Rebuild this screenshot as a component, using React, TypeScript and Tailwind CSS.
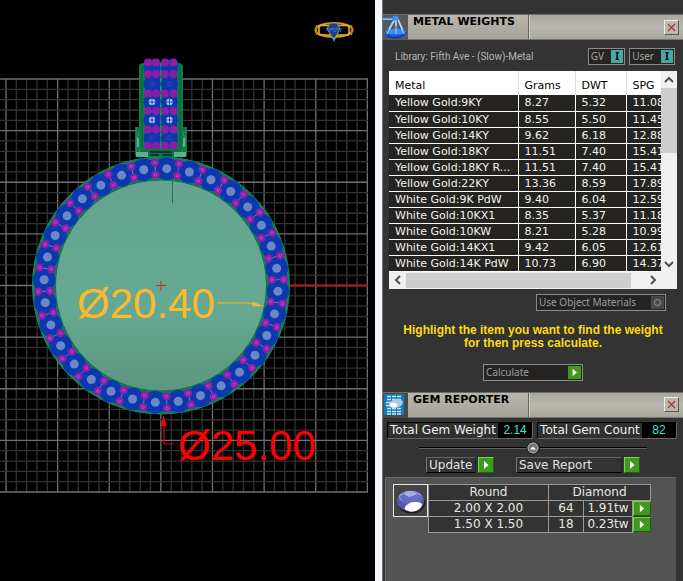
import { useState } from "react";

const metals = [
  ["Yellow Gold:9KY", "8.27", "5.32", "11.08"],
  ["Yellow Gold:10KY", "8.55", "5.50", "11.45"],
  ["Yellow Gold:14KY", "9.62", "6.18", "12.88"],
  ["Yellow Gold:18KY", "11.51", "7.40", "15.41"],
  ["Yellow Gold:18KY R...", "11.51", "7.40", "15.41"],
  ["Yellow Gold:22KY", "13.36", "8.59", "17.89"],
  ["White Gold:9K PdW", "9.40", "6.04", "12.59"],
  ["White Gold:10KX1", "8.35", "5.37", "11.18"],
  ["White Gold:10KW", "8.21", "5.28", "10.99"],
  ["White Gold:14KX1", "9.42", "6.05", "12.61"],
  ["White Gold:14K PdW", "10.73", "6.90", "14.37"],
];

const gems = [
  { size: "2.00 X 2.00", count: "64", weight: "1.91tw" },
  { size: "1.50 X 1.50", count: "18", weight: "0.23tw" },
];

// Ring geometry, in viewport pixels per millimetre
const MM = 10.325;
const CX = 161;
const CY = 285.5;
const STONES = 32;

const polar = (deg: number, r: number) => {
  const a = (deg * Math.PI) / 180;
  return { cx: CX + r * Math.sin(a), cy: CY - r * Math.cos(a) };
};

const Grid = () => (
  <g>
    {Array.from({ length: 36 }, (_, i) => {
      const x = 6 + i * MM;
      const major = i % 5 === 0;
      return <line key={i} x1={x} x2={x} y1={79} y2={492} stroke={major ? "#707070" : "#333"} strokeWidth={1.3} />;
    })}
    {Array.from({ length: 41 }, (_, i) => {
      const y = 79 + i * MM;
      const major = i % 5 === 0;
      return <line key={i} x1={0} x2={368} y1={y} y2={y} stroke={major ? "#707070" : "#333"} strokeWidth={1.3} />;
    })}
  </g>
);

const Prong = ({ cx, cy }: { cx: number; cy: number }) => (
  <g>
    <circle cx={cx} cy={cy} r={4.2} fill="#8c1ea8" />
    <circle cx={cx} cy={cy} r={1.3} fill="none" stroke="#b65cc6" strokeWidth={0.8} />
  </g>
);

const RingHead = () => (
  <g>
    <rect x={135.5} y={127} width={51} height={30} fill="#0f7048" />
    <path d="M136 127v28M140 128l-3 12 4 14M186 127v28M182 128l3 12-4 14" stroke="#2a9d6c" fill="none" />
    <path d="M138 138v9M184 138v9" stroke="#6fc4a0" strokeWidth={1.5} />
    <rect x={136} y={152} width={12} height={5} fill="#62ad8c" />
    <rect x={174} y={152} width={12} height={5} fill="#62ad8c" />
    <path d="M139 149V67q0-4 5-4h34q5 0 5 4v82z" fill="#0f7a4b" />
    <path d="M142 66v82M180 66v82" stroke="#0a5c3a" />
    <rect x={145} y={63} width={15} height={85} fill="#0b36a6" />
    <rect x={162} y={63} width={15} height={85} fill="#0b36a6" />
    <path d="M161 62v88" stroke="#2aa585" strokeDasharray="5 3" />
    {[68, 84, 102, 120, 138].map((y) =>
      [152, 169.5].map((x) => <circle key={`${x}-${y}`} cx={x} cy={y} r={8.5} fill="#0d38ad" />)
    )}
    {[84, 138].map((y) =>
      [152, 169.5].map((x) => (
        <circle key={`${x}-${y}`} cx={x} cy={y} r={2} fill="none" stroke="#3d3fae" />
      ))
    )}
    {[102, 120].map((y) =>
      [152, 169.5].map((x) => (
        <g key={`${x}-${y}`}>
          <circle cx={x} cy={y} r={3.2} fill="#b9c6ee" />
          <path d={`M${x - 3.5} ${y}h7M${x} ${y - 3.5}v7`} stroke="#1b3fae" strokeWidth={0.9} />
        </g>
      ))
    )}
    {[62.5, 74, 93.5, 111, 129.5, 145.5].map((y) =>
      [148, 156, 165, 173.5].map((x) => (
        <circle key={`${x}-${y}`} cx={x} cy={y} r={4} fill="#8a1fa6" />
      ))
    )}
    <path d="M150 152h22M150 155h9M163 155h9" stroke="#04291b" strokeWidth={1.5} />
  </g>
);

const Ring = () => (
  <g>
    <circle cx={CX} cy={CY} r={128.5} fill="#0f7f58" stroke="#138c5e" />
    <circle cx={CX} cy={CY} r={117} fill="none" stroke="#0b3494" strokeWidth={18} />
    {Array.from({ length: STONES }, (_, i) => {
      const c = polar(2.8 + (i * 360) / STONES, 117);
      return (
        <g key={i}>
          <circle {...c} r={11.3} fill="#0a38ae" />
          <circle {...c} r={4.5} fill="#6c86c6" />
        </g>
      );
    })}
    <circle cx={CX} cy={CY} r={105.5} fill="url(#finger)" stroke="#0a7052" />
    {Array.from({ length: STONES }, (_, i) => {
      const deg = 2.8 + ((i + 0.5) * 360) / STONES;
      const outer = polar(deg, 123);
      const inner = polar(deg, 111);
      return (
        <g key={i}>
          <line x1={outer.cx} y1={outer.cy} x2={inner.cx} y2={inner.cy} stroke="#6c9bc6" strokeWidth={0.8} />
          <Prong {...outer} />
          <Prong {...inner} />
        </g>
      );
    })}
  </g>
);

const RingGizmo = () => (
  <g fill="none">
    <ellipse cx={334} cy={30} rx={18.5} ry={7} stroke="#d99a14" strokeWidth={2.2} />
    <rect x={319} y={25.5} width={30} height={9.5} rx={2} stroke="#e7ae2a" strokeWidth={1.6} />
    <path d="M316.500 25v10M351.500 25v10" stroke="#b17f16" strokeWidth={1.5} />
    <path d="M330 23h7l3 6-6 11-7-11z" fill="#243f79" stroke="#8496b8" />
    <path d="M326 28l3 4 3-4 3 4 3-4 3 4M326 29h16" stroke="#3975d3" />
    <path d="M331.500 37h5l-2.500 5z" fill="#4694cb" />
  </g>
);

const Viewport = () => (
  <svg viewBox="0 0 375 581" className="block h-auto w-full" role="img" aria-label="Ring front view">
    <defs>
      <linearGradient id="finger" x1="0" y1="0" x2="0" y2="1">
        <stop offset="0" stopColor="#64a48f" />
        <stop offset="0.6" stopColor="#66a992" />
        <stop offset="1" stopColor="#5c967f" />
      </linearGradient>
    </defs>
    <Grid />
    <line x1={290} x2={368} y1={285.5} y2={285.5} stroke="#b31a10" strokeWidth={2} />
    <RingHead />
    <Ring />
    <path d="M172.500 180v23" stroke="#1d7a5c" />
    <path d="M156 285.500h10M161 280.500v10" stroke="#d02a35" />
    <g className="font-['Liberation_Sans',Arial,sans-serif] text-[42px]">
      <text x={77} y={318} fill="#fbb92e">Ø20.40</text>
      <text x={178} y={460} fill="#fe0000">Ø25.00</text>
    </g>
    <path d="M217 303h31l6 1.500" stroke="#fbb92e" fill="none" strokeWidth={1.2} />
    <path d="M264 306l-12-4.500 1 5z" fill="#fbb92e" />
    <path d="M164 426v18h10" stroke="#e00000" fill="none" strokeWidth={1.2} />
    <path d="M163.500 415l-2.500 11h5.500z" fill="#fe0000" />
    <RingGizmo />
  </svg>
);

const MetalIcon = () => (
  <svg viewBox="0 0 25 25" className="size-[25px] shrink-0">
    <rect width="25" height="25" fill="#55585c" />
    <path d="M0 4h13M13 2l-8 14M14 2l7 16M13 3v8" stroke="#b9dcff" strokeWidth="1.600" />
    <path d="M0 3h12M10 1h5v4h-5z" stroke="#2783e8" fill="#4b9cf0" />
    <ellipse cx="12.500" cy="18" rx="11" ry="4.500" fill="#1757d8" />
    <ellipse cx="12.500" cy="16.500" rx="10" ry="3" fill="#3f8df8" />
    <path d="M10 8l-6 11M13 6v13M16 8l5 11" stroke="#a8d2ff" />
    <path d="M4 21q9 4 17-1" stroke="#0a2b86" fill="none" />
  </svg>
);

const GemIcon = () => (
  <svg viewBox="0 0 25 25" className="size-[25px] shrink-0">
    <rect width="25" height="25" fill="#45494c" />
    <rect x="1" y="1" width="20" height="21" fill="#167bb4" />
    <path d="M4 3.500h14M4 6.500h14M4 15.500h14M4 18.500h14M4 21h14" stroke="#c4e7f5" strokeWidth="1.300" strokeDasharray="4 1" />
    <path d="M3 9.500h5M3 12.500h5" stroke="#c4e7f5" strokeWidth="1.300" />
    <ellipse cx="13" cy="10.500" rx="7" ry="4.500" fill="#a9cadb" transform="rotate(-15 13 10.500)" />
    <ellipse cx="10.500" cy="12" rx="4" ry="2.500" fill="#f2fbff" />
  </svg>
);

const RoundGem = () => (
  <svg viewBox="0 0 34 31" className="block h-[31px] w-full">
    <ellipse cx="18" cy="18" rx="14" ry="11" fill="#1c1c20" />
    <ellipse cx="17" cy="16" rx="14" ry="10.500" fill="#5557ae" />
    <ellipse cx="17" cy="12" rx="12" ry="6.500" fill="#9195dc" />
    <path d="M6 11l7-4h8l8 4-2 6-8 2-10-1z" fill="#686bc3" />
    <path d="M10 9l6 3 8-3-4-3h-7z" fill="#a8aced" />
    <path d="M11 23q3-6 11-6 7 0 7 3-2 7-12 7-6-1-6-4z" fill="#fff" />
  </svg>
);

const Triangle = () => (
  <svg viewBox="0 0 14 14" className="size-full">
    <path d="M5 3l4.500 4-4.500 4z" fill="#fff" />
  </svg>
);

const PlayButton = ({ label }: { label: string }) => (
  <button aria-label={label} className="block size-4 border border-t-[#7fd15a] border-r-[#1f5e0d] border-b-[#1f5e0d] border-l-[#7fd15a] bg-[#3f9a1c]">
    <Triangle />
  </button>
);

interface TitleBarProps {
  title: string;
  icon: React.ReactNode;
}

const TitleBar = ({ title, icon }: TitleBarProps) => (
  <header className="flex h-[26px] border-t border-b border-t-[#6d6c69] border-b-[#77756f] bg-linear-to-b from-[#b9b6ae] to-[#a5a29a]">
    {icon}
    <h2 className="w-[121px] shrink-0 border-r border-[#66645f] pl-[5px] text-[11px] leading-[14px] font-bold whitespace-nowrap text-black">{title}</h2>
    <div className="flex grow items-center justify-end border-l border-[#d2cfc8] bg-linear-to-b from-[#a9a69e] via-[#bbb8b0] to-[#a9a69e] pr-1">
      <button aria-label={`Close ${title}`} className="size-[15px] border border-t-[#eee] border-r-[#555] border-b-[#555] border-l-[#eee] bg-[#bcb8b0]">
        <svg viewBox="0 0 13 13" className="size-full">
          <path d="M3 3l7 7M10 3l-7 7" stroke="#b2352f" strokeWidth="1.200" />
        </svg>
      </button>
    </div>
  </header>
);

const Toggle = ({ label }: { label: string }) => {
  const [on, setOn] = useState(true);

  return (
    <button aria-pressed={on} onClick={() => setOn(!on)} className="flex h-[17px] items-center gap-[7px] border border-[#8b8b8b] bg-[#252422] pr-px pl-0.5 font-['Noto_Sans',Tahoma,sans-serif] text-[10px] text-[#a6a6a6]">
      {label}
      <span className={`flex h-[13px] w-3 items-center justify-center font-bold text-black ${on ? "bg-[#46a9a6]" : "bg-[#555]"}`}>I</span>
    </button>
  );
};

const Chevron = ({ d }: { d: string }) => (
  <svg viewBox="0 0 10 10" className="size-2.5">
    <path d={d} fill="none" stroke="#505050" strokeWidth="2" />
  </svg>
);

const MetalTable = () => (
  <div className="mx-1.5 mt-1.5 bg-[#f0f0f0]">
    <div className="flex">
      <div className="min-w-0 grow overflow-hidden">
        <table className="w-full table-fixed border-collapse text-[11px]">
          <colgroup>
            <col />
            <col className="w-[57px]" />
            <col className="w-[51px]" />
            <col className="w-[35px]" />
          </colgroup>
          <thead>
            <tr className="h-6 bg-white text-black">
              {["Metal", "Grams", "DWT", "SPG"].map((name) => (
                <th key={name} className="border-r border-[#dedede] pt-1 pl-1.5 text-left leading-[15px] font-normal last:border-r-0">{name}</th>
              ))}
            </tr>
          </thead>
          <tbody className="bg-[#252420] text-[#f2f2f2]">
            {metals.map((row) => (
              <tr key={row[0]} className="h-4">
                {row.map((cell, i) => (
                  <td key={i} className="overflow-hidden border-r border-b border-white pl-1.5 leading-[15px] whitespace-nowrap last:border-r-0">{cell}</td>
                ))}
              </tr>
            ))}
          </tbody>
        </table>
      </div>
      <div className="flex w-4 shrink-0 flex-col items-center">
        <button aria-label="Scroll up" className="flex h-[17px] shrink-0 items-center"><Chevron d="M1 7l4-4 4 4" /></button>
        <div className="h-[65px] w-full shrink-0 bg-[#cdcdcd]" />
        <button aria-label="Scroll down" className="mt-auto flex h-4 items-center"><Chevron d="M1 3l4 4 4-4" /></button>
      </div>
    </div>
    <div className="flex h-[17px] items-center pr-4">
      <button aria-label="Scroll left" className="flex w-[17px] justify-center"><Chevron d="M7 1l-4 4 4 4" /></button>
      <div className="mr-3.5 h-[15px] grow bg-[#cdcdcd]" />
      <button aria-label="Scroll right" className="flex w-4 justify-center"><Chevron d="M3 1l4 4-4 4" /></button>
    </div>
  </div>
);

const MetalWeights = () => (
  <section>
    <TitleBar title="METAL WEIGHTS" icon={<MetalIcon />} />
    <div className="mt-2 flex items-center gap-1 pr-2 pl-3">
      <p className="grow font-['Roboto',Arial,sans-serif] text-[10px] text-[#b4b4b4]">Library: Fifth Ave - (Slow)-Metal</p>
      <Toggle label="GV" />
      <Toggle label="User" />
    </div>
    <MetalTable />
    <div className="mt-[5px] flex justify-end pr-[17px]">
      <button className="flex h-[17px] w-[130px] items-center justify-between border border-[#8b8b8b] bg-[#252422] pl-0.5 font-['Noto_Sans',Tahoma,sans-serif] text-[10px] text-[#9c9c9c]">
        Use Object Materials
        <svg viewBox="0 0 13 13" className="mr-px size-[13px] bg-[#494949]">
          <circle cx="6.500" cy="6.500" r="3" fill="none" stroke="#999" />
        </svg>
      </button>
    </div>
    <p className="mt-[13px] text-center font-['Liberation_Sans',Arial,sans-serif] text-[12px] leading-[13px] font-bold text-[#fcdc08]">
      Highlight the item you want to find the weight
      <br />
      for then press calculate.
    </p>
    <div className="mt-3.5 flex justify-center">
      <button className="flex h-[17px] w-[100px] items-center justify-between border border-[#8b8b8b] bg-[#252422] pl-0.5 font-['Noto_Sans',Tahoma,sans-serif] text-[10px] text-[#9c9c9c]">
        Calculate
        <span className="mr-px size-[13px] bg-[#3f9a1c]"><Triangle /></span>
      </button>
    </div>
  </section>
);

const Total = ({ label, value }: { label: string; value: string }) => (
  <dl className="flex h-[17px] grow items-center justify-between border border-t-black border-r-[#666] border-b-[#666] border-l-black bg-[#303030] pl-0.5 text-[12px] whitespace-nowrap">
    <dt className="text-[#f0f0f0]">{label}</dt>
    <dd className="h-full w-[34px] bg-black text-center font-['Liberation_Sans',Arial,sans-serif] leading-[15px] text-[#45e0cf]">{value}</dd>
  </dl>
);

const GemTable = () => (
  <div className="flex items-start">
    <div className="h-[33px] w-[35px] shrink-0 border border-[#e8e8e8] bg-[#444]">
      <RoundGem />
    </div>
    <table className="w-[222px] table-fixed border-collapse text-center text-[12px] leading-[15px] text-[#e8e8e0]">
      <colgroup>
        <col className="w-[120px]" />
        <col className="w-[35px]" />
        <col className="w-[49px]" />
        <col className="w-[18px]" />
      </colgroup>
      <thead>
        <tr className="h-4">
          <th className="border border-[#999] bg-[#333] font-normal">Round</th>
          <th colSpan={3} className="border border-[#999] bg-[#333] font-normal">Diamond</th>
        </tr>
      </thead>
      <tbody>
        {gems.map((gem) => (
          <tr key={gem.size} className="h-4">
            <td className="border border-[#999] bg-[#333]">{gem.size}</td>
            <td className="border border-[#999] bg-[#333]">{gem.count}</td>
            <td className="border border-[#999] bg-[#333]">{gem.weight}</td>
            <td className="bg-[#333]">
              <button aria-label={`Show ${gem.size}`} className="block h-[15px] w-full border border-t-[#7fd15a] border-r-[#1f5e0d] border-b-[#1f5e0d] border-l-[#7fd15a] bg-[#3f9a1c]">
                <Triangle />
              </button>
            </td>
          </tr>
        ))}
      </tbody>
    </table>
  </div>
);

const GemReporter = () => (
  <section className="flex grow flex-col">
    <TitleBar title="GEM REPORTER" icon={<GemIcon />} />
    <div className="mt-1 flex gap-1 pr-1.5 pl-1">
      <Total label="Total Gem Weight" value="2.14" />
      <Total label="Total Gem Count" value="82" />
    </div>
    <div className="mt-0.5 flex items-center px-9">
      <span className="h-0.5 grow border-t border-black bg-[#626262]" />
      <button aria-label="Collapse totals" className="size-3.5">
        <svg viewBox="0 0 14 14" className="size-full">
          <circle cx="7" cy="7" r="6" fill="#757575" stroke="#111" />
          <circle cx="7" cy="7" r="5" fill="none" stroke="#b0b0b0" />
          <path d="M4 8.500l3-3 3 3z" fill="#fff" />
        </svg>
      </button>
      <span className="h-0.5 grow border-t border-black bg-[#626262]" />
    </div>
    <div className="mt-0.5 flex items-center justify-center gap-[22px] text-[12px] text-[#e2e2e2]">
      <div className="flex gap-0.5">
        <button className="h-4 w-[50px] border border-t-[#666] border-r-[#222] border-b-black border-l-[#777] pl-0.5 text-left leading-[15px]">Update</button>
        <PlayButton label="Run update" />
      </div>
      <div className="flex gap-0.5">
        <button className="h-4 w-[106px] border border-t-[#666] border-r-[#222] border-b-black border-l-[#777] pl-0.5 text-left leading-[15px]">Save Report</button>
        <PlayButton label="Run save report" />
      </div>
    </div>
    <div className="mt-1 mr-[7px] ml-0.5 grow border-t border-l border-[#6b6b6b] bg-[#535353] pt-1.5 pl-[7px]">
      <GemTable />
    </div>
  </section>
);

export default function App() {
  return (
    <div className="flex min-h-screen bg-[#333] font-['DejaVu_Sans',Verdana,sans-serif]">
      <main className="min-w-0 grow border-r-[7px] border-[#f3f6fb] bg-black">
        <Viewport />
      </main>
      <aside className="flex w-[301px] shrink-0 flex-col gap-[11px] border-l border-[#777] bg-[#333] pt-3.5">
        <MetalWeights />
        <GemReporter />
      </aside>
    </div>
  );
}
